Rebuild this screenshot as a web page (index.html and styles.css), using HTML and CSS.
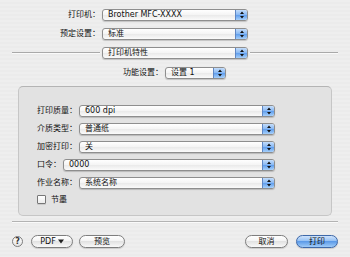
FILE: index.html
```html
<!DOCTYPE html>
<html lang="zh-CN">
<head>
    <meta charset="UTF-8">
    <title>打印</title>
    <link rel="stylesheet" href="styles.css">
</head>
<body>
    <div class="dialog">
        <div class="row">
            <span class="label main">打印机：</span>
            <div class="popup wide"><span class="value">Brother MFC-XXXX</span><span class="arrows"><svg width="10" height="10" viewBox="0 0 10 10"><path d="M3 4 L7 4 L5 1.5 Z M3 6 L7 6 L5 8.5 Z" fill="#111"/></svg></span></div>
        </div>
        <div class="row">
            <span class="label main">预定设置：</span>
            <div class="popup wide"><span class="value">标准</span><span class="arrows"><svg width="10" height="10" viewBox="0 0 10 10"><path d="M3 4 L7 4 L5 1.5 Z M3 6 L7 6 L5 8.5 Z" fill="#111"/></svg></span></div>
        </div>
        <div class="row divider">
            <span class="line"></span>
            <div class="popup wide"><span class="value">打印机特性</span><span class="arrows"><svg width="10" height="10" viewBox="0 0 10 10"><path d="M3 4 L7 4 L5 1.5 Z M3 6 L7 6 L5 8.5 Z" fill="#111"/></svg></span></div>
            <span class="line"></span>
        </div>
        <div class="row">
            <span class="label feature">功能设置：</span>
            <div class="popup small"><span class="value">设置 1</span><span class="arrows"><svg width="10" height="10" viewBox="0 0 10 10"><path d="M3 4 L7 4 L5 1.5 Z M3 6 L7 6 L5 8.5 Z" fill="#111"/></svg></span></div>
        </div>

        <div class="group">
            <div class="grow">
                <span class="label">打印质量：</span>
                <div class="popup fill"><span class="value">600 dpi</span><span class="arrows"><svg width="10" height="10" viewBox="0 0 10 10"><path d="M3 4 L7 4 L5 1.5 Z M3 6 L7 6 L5 8.5 Z" fill="#111"/></svg></span></div>
            </div>
            <div class="grow">
                <span class="label">介质类型：</span>
                <div class="popup fill"><span class="value">普通纸</span><span class="arrows"><svg width="10" height="10" viewBox="0 0 10 10"><path d="M3 4 L7 4 L5 1.5 Z M3 6 L7 6 L5 8.5 Z" fill="#111"/></svg></span></div>
            </div>
            <div class="grow">
                <span class="label">加密打印：</span>
                <div class="popup fill"><span class="value">关</span><span class="arrows"><svg width="10" height="10" viewBox="0 0 10 10"><path d="M3 4 L7 4 L5 1.5 Z M3 6 L7 6 L5 8.5 Z" fill="#111"/></svg></span></div>
            </div>
            <div class="grow">
                <span class="label">口令：</span>
                <div class="popup fill"><span class="value">0000</span><span class="arrows"><svg width="10" height="10" viewBox="0 0 10 10"><path d="M3 4 L7 4 L5 1.5 Z M3 6 L7 6 L5 8.5 Z" fill="#111"/></svg></span></div>
            </div>
            <div class="grow">
                <span class="label">作业名称：</span>
                <div class="popup fill"><span class="value">系统名称</span><span class="arrows"><svg width="10" height="10" viewBox="0 0 10 10"><path d="M3 4 L7 4 L5 1.5 Z M3 6 L7 6 L5 8.5 Z" fill="#111"/></svg></span></div>
            </div>
            <label class="check"><span class="box"></span>节墨</label>
        </div>

        <div class="sep"></div>

        <div class="buttons">
            <span class="help">?</span>
            <span class="btn pdf">PDF <svg width="6" height="5" viewBox="0 0 6 5"><path d="M0 0.5 L6 0.5 L3 4.5 Z" fill="#222"/></svg></span>
            <span class="btn preview">预览</span>
            <span class="btn cancel">取消</span>
            <span class="btn print">打印</span>
        </div>
    </div>
</body>
</html>
```

FILE: styles.css
```css
body {
    margin: 0;
}

.dialog {
    width: 350px;
    height: 257px;
    box-sizing: border-box;
    padding-top: 9px;
    background: repeating-linear-gradient(#eeeeee 0, #eeeeee 2px, #ebebeb 2px, #ebebeb 4px);
    font-family: "DejaVu Sans", "Noto Sans CJK SC", sans-serif;
    font-size: 8px;
    color: #111;
}

.row {
    display: flex;
    align-items: center;
    height: 12px;
    margin-bottom: 7px;
}

.label {
    line-height: 12px;
    white-space: nowrap;
}

.label.main {
    width: 100px;
    text-align: right;
    margin-right: 2px;
}

.label.feature {
    width: 163px;
    text-align: right;
    margin-right: 2px;
}

.divider {
    margin-bottom: 8px;
}

.line {
    width: 88px;
    height: 1px;
    margin: 0 2px 0 12px;
    background: #a9a9a9;
    border-bottom: 1px solid #fafafa;
}

.divider .line:last-child {
    margin: 0 0 0 2px;
}

.popup {
    display: flex;
    box-sizing: border-box;
    height: 12px;
    border: 1px solid #8e8e8e;
    border-radius: 3px;
    background: linear-gradient(#ffffff, #f4f4f4 50%, #e9e9e9 50%, #fbfbfb);
    box-shadow: 0 1px 1px rgba(0, 0, 0, 0.18);
    overflow: hidden;
}

.popup.wide {
    width: 146px;
}

.popup.small {
    width: 61px;
}

.popup.fill {
    flex: 1;
}

.value {
    flex: 1;
    padding-left: 5px;
    line-height: 10px;
    white-space: nowrap;
}

.arrows {
    width: 11px;
    display: flex;
    align-items: center;
    justify-content: center;
    border-left: 1px solid #5f87c4;
    background: linear-gradient(#c4ddfb, #86b7f3 50%, #5d9cec 50%, #a7d0fb);
}

.group {
    margin: 5px 18px 0 18px;
    padding: 18px 56px 11px 18px;
    background: #e2e2e2;
    border: 1px solid #c6c6c6;
    border-top-color: #b4b4b4;
    border-radius: 5px;
}

.grow {
    display: flex;
    align-items: center;
    height: 12px;
    margin-bottom: 6px;
}

.grow .label {
    margin-right: 2px;
}

.check {
    display: flex;
    align-items: center;
    height: 9px;
    margin-top: 1px;
    line-height: 9px;
}

.box {
    width: 7px;
    height: 7px;
    margin-right: 5px;
    border: 1px solid #777;
    border-radius: 1px;
    background: linear-gradient(#ffffff, #ececec);
    box-shadow: 0 1px 0 rgba(0, 0, 0, 0.1);
}

.sep {
    height: 1px;
    margin: 5px 12px 0 12px;
    background: #b3b3b3;
    border-bottom: 1px solid #fafafa;
}

.buttons {
    display: flex;
    align-items: center;
    padding: 0 12px;
    margin-top: 12px;
}

.help {
    width: 11px;
    height: 11px;
    box-sizing: border-box;
    border: 1px solid #7d7d7d;
    border-radius: 50%;
    background: linear-gradient(#ffffff, #e4e4e4);
    font-size: 8px;
    line-height: 9px;
    text-align: center;
    font-weight: bold;
    color: #333;
    margin-right: 8px;
}

.btn {
    display: flex;
    align-items: center;
    justify-content: center;
    box-sizing: border-box;
    height: 13px;
    border: 1px solid #7e7e7e;
    border-radius: 7px;
    background: linear-gradient(#ffffff, #f2f2f2 50%, #e2e2e2 50%, #f9f9f9);
    box-shadow: 0 1px 1px rgba(0, 0, 0, 0.15);
    line-height: 11px;
}

.pdf {
    width: 42px;
    margin-right: 6px;
    gap: 2px;
}

.preview {
    width: 46px;
}

.cancel {
    width: 43px;
    margin-left: auto;
    margin-right: 8px;
}

.print {
    width: 42px;
    border-color: #3e68a8;
    background: linear-gradient(#cfe3fb, #8fbdf3 50%, #5d9be8 50%, #9fcbf8);
}
```
